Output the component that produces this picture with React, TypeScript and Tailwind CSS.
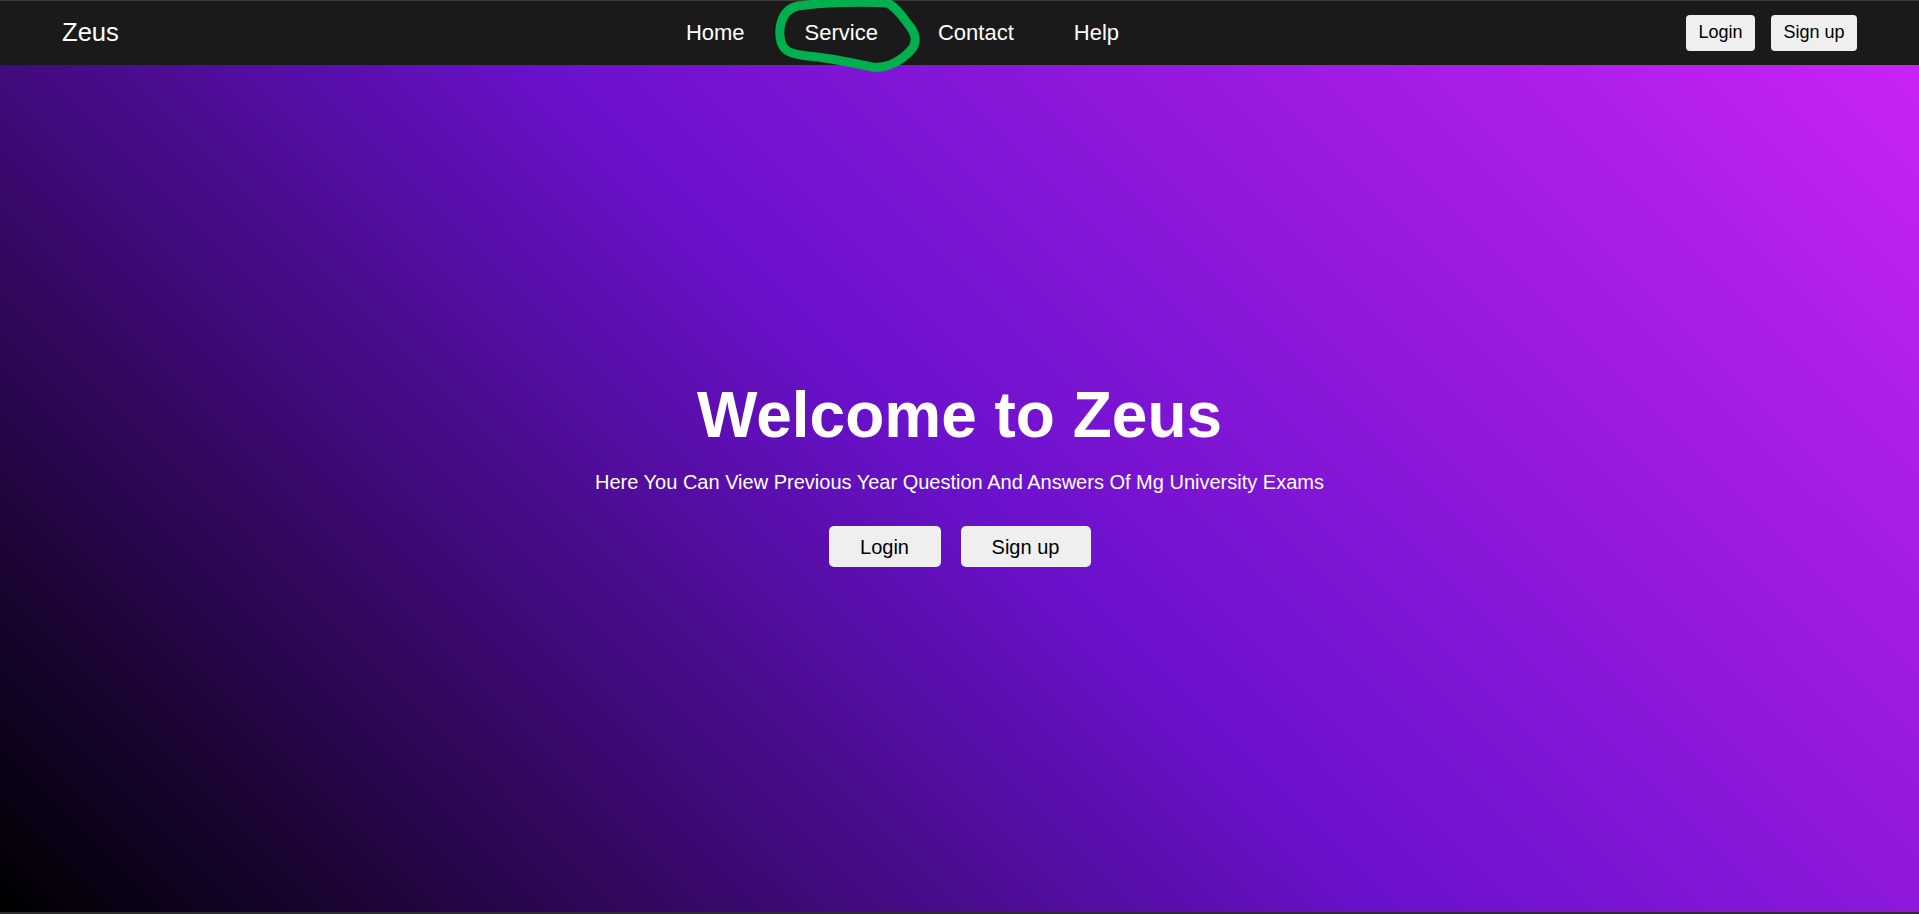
import React from "react";

export default function App() {
  return (
    <div className="relative flex h-screen w-full flex-col overflow-hidden border-b-2 border-[#2e2e2e] bg-[#1a1a1a] font-['Liberation_Sans',Arial,sans-serif]">
      <header className="flex h-[65px] shrink-0 items-center justify-between border-t border-[#3a3a3a] bg-[#1a1a1a] px-[62px] pb-[1px]">
        <div className="text-[25.6px] text-white">Zeus</div>
        <nav className="flex items-center gap-[60px] text-[22px] text-white">
          <a>Home</a>
          <a>Service</a>
          <a>Contact</a>
          <a>Help</a>
        </nav>
        <div className="flex items-center gap-[16px]">
          <button className="h-[36px] w-[69px] rounded-[4px] bg-[#efefef] text-[18px] text-black">Login</button>
          <button className="h-[36px] w-[86px] rounded-[4px] bg-[#efefef] text-[18px] text-black">Sign up</button>
        </div>
      </header>
      <main className="flex flex-1 flex-col items-center justify-center bg-[linear-gradient(45deg,#000000_0%,#6a11cb_50%,#c824f4_100%)] pb-[32px] text-white">
        <h1 className="text-[64px] font-bold leading-[74px]">Welcome to Zeus</h1>
        <p className="mt-[19px] text-[20px] leading-[23px]">
          Here You Can View Previous Year Question And Answers Of Mg University Exams
        </p>
        <div className="mt-[32px] flex gap-[20px]">
          <button className="h-[41px] w-[112px] rounded-[5px] bg-[#efefef] text-[20px] text-black">Login</button>
          <button className="h-[41px] w-[130px] rounded-[5px] bg-[#efefef] text-[20px] text-black">Sign up</button>
        </div>
      </main>
      <svg
        className="pointer-events-none absolute left-[760px] top-0"
        width="180"
        height="80"
        viewBox="0 0 180 80"
        fill="none"
      >
        <path
          d="M 128 3 C 100 1, 60 3, 38 6 C 20 10, 18 30, 21 42 C 24 52, 32 54, 48 56 C 72 58, 92 63, 112 67 C 128 69, 142 60, 151 50 C 159 41, 154 31, 148 24 C 142 16, 137 8, 128 3 Z"
          stroke="#00b04f"
          strokeWidth="9"
          strokeLinejoin="round"
          strokeLinecap="round"
        />
      </svg>
    </div>
  );
}
